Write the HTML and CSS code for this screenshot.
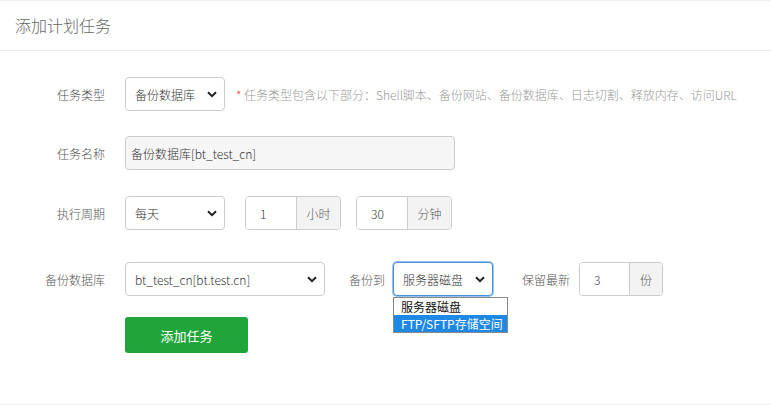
FILE: index.html
```html
<!DOCTYPE html>
<html lang="zh-CN">
<head>
<meta charset="utf-8">
<title>添加计划任务</title>
<link rel="stylesheet" href="styles.css">
</head>
<body>
<div class="panel">
  <div class="head">添加计划任务</div>
  <div class="form">
    <div class="row row1">
      <div class="label">任务类型</div>
      <div class="select w100"><span>备份数据库</span><svg class="chev" viewBox="0 0 10 7" width="10" height="7"><path d="M1 1.2 L5 5.2 L9 1.2" fill="none" stroke="#222" stroke-width="2"/></svg></div>
      <div class="tip"><span class="star">*</span> 任务类型包含以下部分：Shell脚本、备份网站、备份数据库、日志切割、释放内存、访问URL</div>
    </div>
    <div class="row row2">
      <div class="label">任务名称</div>
      <div class="input readonly w330">备份数据库[bt_test_cn]</div>
    </div>
    <div class="row row3">
      <div class="label">执行周期</div>
      <div class="select w100"><span>每天</span><svg class="chev" viewBox="0 0 10 7" width="10" height="7"><path d="M1 1.2 L5 5.2 L9 1.2" fill="none" stroke="#222" stroke-width="2"/></svg></div>
      <div class="group g1">
        <div class="gin">1</div>
        <div class="addon">小时</div>
      </div>
      <div class="group g2">
        <div class="gin">30</div>
        <div class="addon">分钟</div>
      </div>
    </div>
    <div class="row row4">
      <div class="label">备份数据库</div>
      <div class="select w200"><span>bt_test_cn[bt.test.cn]</span><svg class="chev" viewBox="0 0 10 7" width="10" height="7"><path d="M1 1.2 L5 5.2 L9 1.2" fill="none" stroke="#222" stroke-width="2"/></svg></div>
      <div class="sublabel to">备份到</div>
      <div class="dd">
        <div class="select w100 focus"><span>服务器磁盘</span><svg class="chev" viewBox="0 0 10 7" width="10" height="7"><path d="M1 1.2 L5 5.2 L9 1.2" fill="none" stroke="#222" stroke-width="2"/></svg></div>
        <div class="list">
          <div class="opt">服务器磁盘</div>
          <div class="opt sel">FTP/SFTP存储空间</div>
        </div>
      </div>
      <div class="sublabel keep">保留最新</div>
      <div class="group g3">
        <div class="gin">3</div>
        <div class="addon">份</div>
      </div>
    </div>
    <div class="row row5">
      <div class="label"></div>
      <div class="btn">添加任务</div>
    </div>
  </div>
</div>
</body>
</html>
```
FILE: styles.css
```css
* { box-sizing: border-box; }
html, body { margin: 0; padding: 0; background: #fff; }
body {
  font-family: "Noto Sans CJK SC", "Noto Sans", sans-serif;
  font-size: 12px;
  font-weight: 300;
  color: #555;
}
.panel {
  width: 771px;
  height: 405px;
  border-top: 1px solid #f2f2f2;
  border-bottom: 1px solid #eee;
}
.head {
  height: 50px;
  border-bottom: 1px solid #e8e8e8;
  padding-left: 15px;
  font-size: 16px;
  line-height: 48px;
  color: #666;
}
.form { padding-top: 26px; }
.row {
  display: flex;
  align-items: center;
  height: 34px;
}
.row2 { margin-top: 25px; }
.row3 { margin-top: 26px; }
.row4 { margin-top: 32px; }
.row5 { margin-top: 21px; height: 36px; }
.label {
  width: 105px;
  margin-right: 20px;
  text-align: right;
  color: #555;
  font-size: 12px;
}
.select {
  height: 34px;
  border: 1px solid #ccc;
  border-radius: 4px;
  background: #fff;
  display: flex;
  align-items: center;
  justify-content: space-between;
  padding: 0 7px 0 9px;
  color: #333;
  font-size: 12px;
}
.w100 { width: 100px; }
.w200 { width: 200px; }
.w330 { width: 330px; }
.chev { display: block; }
.tip {
  margin-left: 11px;
  color: #999;
  font-size: 12px;
}
.star { color: #e33; }
.input {
  height: 34px;
  border: 1px solid #ccc;
  border-radius: 4px;
  display: flex;
  align-items: center;
  padding-left: 5px;
  color: #333;
  font-size: 12px;
}
.readonly { background: #f6f6f6; }
.group {
  display: flex;
  height: 34px;
  border: 1px solid #ccc;
  border-radius: 4px;
  overflow: hidden;
}
.g1 { margin-left: 20px; width: 96px; }
.g2 { margin-left: 15px; width: 96px; }
.g3 { margin-left: 9px; width: 84px; }
.gin {
  flex: 1;
  display: flex;
  align-items: center;
  padding-left: 14px;
  color: #333;
  background: #fff;
}
.addon {
  width: 44px;
  border-left: 1px solid #ccc;
  background: #f3f3f3;
  display: flex;
  align-items: center;
  justify-content: center;
  color: #555;
}
.g3 .addon { width: 33px; }
.sublabel { color: #555; font-size: 12px; }
.to { margin-left: 24px; margin-right: 8px; }
.keep { margin-left: 29px; }
.dd { position: relative; }
.focus {
  border-color: #4a90d9;
  box-shadow: 0 0 0 1px #9cc3ee;
}
.list {
  position: absolute;
  left: 0;
  top: 35px;
  width: 115px;
  border: 1px solid #888;
  background: #fff;
  z-index: 2;
}
.opt {
  height: 17px;
  line-height: 17px;
  padding-left: 7px;
  color: #111;
  font-size: 12px;
  font-weight: 400;
  white-space: nowrap;
}
.opt.sel { background: #1e88e5; color: #fff; }
.btn {
  width: 123px;
  height: 36px;
  background: #20a53a;
  border-radius: 3px;
  color: #fff;
  font-size: 13px;
  font-weight: 400;
  display: flex;
  align-items: center;
  justify-content: center;
}
```
